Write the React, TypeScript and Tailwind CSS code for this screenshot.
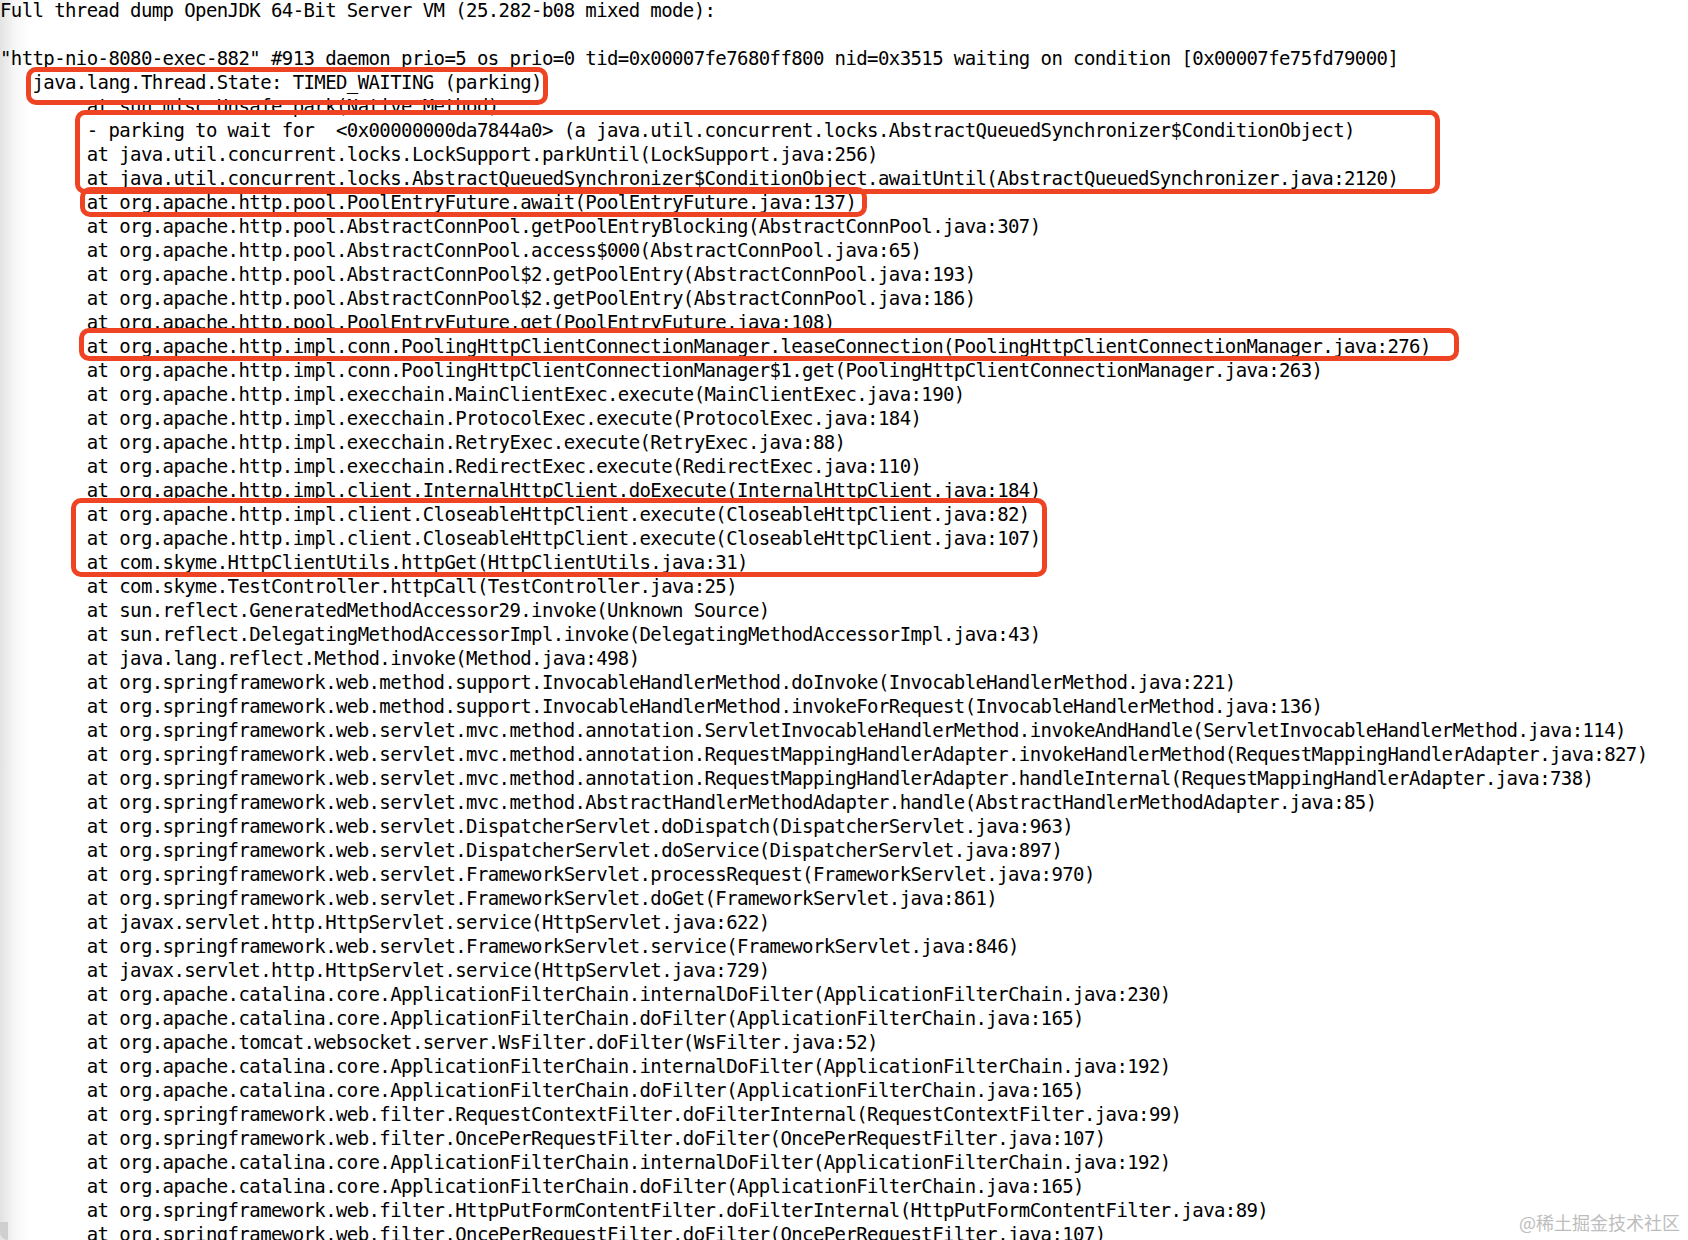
import React from "react";

const T = "        ";
const lines: string[] = [
  "Full thread dump OpenJDK 64-Bit Server VM (25.282-b08 mixed mode):",
  "",
  "\"http-nio-8080-exec-882\" #913 daemon prio=5 os prio=0 tid=0x00007fe7680ff800 nid=0x3515 waiting on condition [0x00007fe75fd79000]",
  "   java.lang.Thread.State: TIMED_WAITING (parking)",
  T + "at sun.misc.Unsafe.park(Native Method)",
  T + "- parking to wait for  <0x00000000da7844a0> (a java.util.concurrent.locks.AbstractQueuedSynchronizer$ConditionObject)",
  T + "at java.util.concurrent.locks.LockSupport.parkUntil(LockSupport.java:256)",
  T + "at java.util.concurrent.locks.AbstractQueuedSynchronizer$ConditionObject.awaitUntil(AbstractQueuedSynchronizer.java:2120)",
  T + "at org.apache.http.pool.PoolEntryFuture.await(PoolEntryFuture.java:137)",
  T + "at org.apache.http.pool.AbstractConnPool.getPoolEntryBlocking(AbstractConnPool.java:307)",
  T + "at org.apache.http.pool.AbstractConnPool.access$000(AbstractConnPool.java:65)",
  T + "at org.apache.http.pool.AbstractConnPool$2.getPoolEntry(AbstractConnPool.java:193)",
  T + "at org.apache.http.pool.AbstractConnPool$2.getPoolEntry(AbstractConnPool.java:186)",
  T + "at org.apache.http.pool.PoolEntryFuture.get(PoolEntryFuture.java:108)",
  T + "at org.apache.http.impl.conn.PoolingHttpClientConnectionManager.leaseConnection(PoolingHttpClientConnectionManager.java:276)",
  T + "at org.apache.http.impl.conn.PoolingHttpClientConnectionManager$1.get(PoolingHttpClientConnectionManager.java:263)",
  T + "at org.apache.http.impl.execchain.MainClientExec.execute(MainClientExec.java:190)",
  T + "at org.apache.http.impl.execchain.ProtocolExec.execute(ProtocolExec.java:184)",
  T + "at org.apache.http.impl.execchain.RetryExec.execute(RetryExec.java:88)",
  T + "at org.apache.http.impl.execchain.RedirectExec.execute(RedirectExec.java:110)",
  T + "at org.apache.http.impl.client.InternalHttpClient.doExecute(InternalHttpClient.java:184)",
  T + "at org.apache.http.impl.client.CloseableHttpClient.execute(CloseableHttpClient.java:82)",
  T + "at org.apache.http.impl.client.CloseableHttpClient.execute(CloseableHttpClient.java:107)",
  T + "at com.skyme.HttpClientUtils.httpGet(HttpClientUtils.java:31)",
  T + "at com.skyme.TestController.httpCall(TestController.java:25)",
  T + "at sun.reflect.GeneratedMethodAccessor29.invoke(Unknown Source)",
  T + "at sun.reflect.DelegatingMethodAccessorImpl.invoke(DelegatingMethodAccessorImpl.java:43)",
  T + "at java.lang.reflect.Method.invoke(Method.java:498)",
  T + "at org.springframework.web.method.support.InvocableHandlerMethod.doInvoke(InvocableHandlerMethod.java:221)",
  T + "at org.springframework.web.method.support.InvocableHandlerMethod.invokeForRequest(InvocableHandlerMethod.java:136)",
  T + "at org.springframework.web.servlet.mvc.method.annotation.ServletInvocableHandlerMethod.invokeAndHandle(ServletInvocableHandlerMethod.java:114)",
  T + "at org.springframework.web.servlet.mvc.method.annotation.RequestMappingHandlerAdapter.invokeHandlerMethod(RequestMappingHandlerAdapter.java:827)",
  T + "at org.springframework.web.servlet.mvc.method.annotation.RequestMappingHandlerAdapter.handleInternal(RequestMappingHandlerAdapter.java:738)",
  T + "at org.springframework.web.servlet.mvc.method.AbstractHandlerMethodAdapter.handle(AbstractHandlerMethodAdapter.java:85)",
  T + "at org.springframework.web.servlet.DispatcherServlet.doDispatch(DispatcherServlet.java:963)",
  T + "at org.springframework.web.servlet.DispatcherServlet.doService(DispatcherServlet.java:897)",
  T + "at org.springframework.web.servlet.FrameworkServlet.processRequest(FrameworkServlet.java:970)",
  T + "at org.springframework.web.servlet.FrameworkServlet.doGet(FrameworkServlet.java:861)",
  T + "at javax.servlet.http.HttpServlet.service(HttpServlet.java:622)",
  T + "at org.springframework.web.servlet.FrameworkServlet.service(FrameworkServlet.java:846)",
  T + "at javax.servlet.http.HttpServlet.service(HttpServlet.java:729)",
  T + "at org.apache.catalina.core.ApplicationFilterChain.internalDoFilter(ApplicationFilterChain.java:230)",
  T + "at org.apache.catalina.core.ApplicationFilterChain.doFilter(ApplicationFilterChain.java:165)",
  T + "at org.apache.tomcat.websocket.server.WsFilter.doFilter(WsFilter.java:52)",
  T + "at org.apache.catalina.core.ApplicationFilterChain.internalDoFilter(ApplicationFilterChain.java:192)",
  T + "at org.apache.catalina.core.ApplicationFilterChain.doFilter(ApplicationFilterChain.java:165)",
  T + "at org.springframework.web.filter.RequestContextFilter.doFilterInternal(RequestContextFilter.java:99)",
  T + "at org.springframework.web.filter.OncePerRequestFilter.doFilter(OncePerRequestFilter.java:107)",
  T + "at org.apache.catalina.core.ApplicationFilterChain.internalDoFilter(ApplicationFilterChain.java:192)",
  T + "at org.apache.catalina.core.ApplicationFilterChain.doFilter(ApplicationFilterChain.java:165)",
  T + "at org.springframework.web.filter.HttpPutFormContentFilter.doFilterInternal(HttpPutFormContentFilter.java:89)",
  T + "at org.springframework.web.filter.OncePerRequestFilter.doFilter(OncePerRequestFilter.java:107)",
];

export default function App() {
  return (
    <div className="relative h-[1240px] w-[1688px] overflow-hidden bg-[linear-gradient(to_right,#e2e2e2_0px,#f6f6f6_14px,#ffffff_30px)]">
      <pre className="-mt-[2px] whitespace-pre font-['DejaVu_Sans_Mono',monospace] text-[19px] leading-[24px] tracking-[-0.6px] text-[#000000]">
        {lines.map((l, i) => (
          <div key={i} className="h-[24px]">
            {l === "" ? "\u00a0" : l}
          </div>
        ))}
      </pre>

      {/* highlight boxes */}
      <div className="absolute left-[26px] top-[67px] h-[38px] w-[522px] rounded-[10px] border-[5px] border-[#ef4423]" />
      <div className="absolute left-[75px] top-[110px] h-[84px] w-[1365px] rounded-[10px] border-[5px] border-[#ef4423]" />
      <div className="absolute left-[80px] top-[187px] h-[30px] w-[787px] rounded-[10px] border-[5px] border-[#ef4423]" />
      <div className="absolute left-[79px] top-[328px] h-[33px] w-[1380px] rounded-[10px] border-[5px] border-[#ef4423]" />
      <div className="absolute left-[71px] top-[498px] h-[79px] w-[976px] rounded-[10px] border-[5px] border-[#ef4423]" />

      {/* left-bottom window corner */}
      <div className="absolute bottom-0 left-0 h-[18px] w-[8px] rounded-bl-[14px] bg-[#cfcfcf]" />

      <div className="absolute bottom-[6px] right-[8px] font-['Noto_Sans_CJK_SC',sans-serif] text-[18px] leading-[24px] text-[#bdbdbd]">
        @稀土掘金技术社区
      </div>
    </div>
  );
}
